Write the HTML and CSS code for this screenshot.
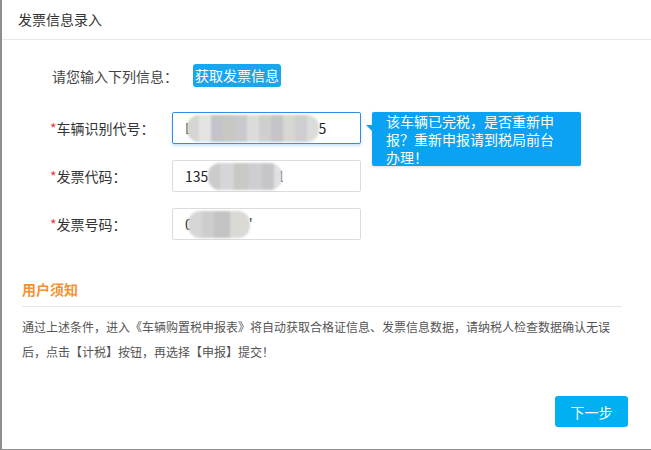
FILE: index.html
```html
<!DOCTYPE html>
<html lang="zh-CN">
<head>
<meta charset="utf-8">
<title>发票信息录入</title>
<link rel="stylesheet" href="styles.css">
</head>
<body>
<div class="modal">
  <div class="header">发票信息录入</div>
  <div class="form">
    <div class="intro">
      <span class="intro-text">请您输入下列信息：</span>
      <button class="fetch-btn">获取发票信息</button>
    </div>
    <div class="row">
      <label class="label"><span class="star">*</span>车辆识别代号：</label>
      <div class="input focus"><span class="ch">L</span><span class="mosaic m1"></span><span class="ch">5</span></div>
      <div class="tip">该车辆已完税，是否重新申报？重新申报请到税局前台办理！</div>
    </div>
    <div class="row">
      <label class="label"><span class="star">*</span>发票代码：</label>
      <div class="input"><span class="ch">135</span><span class="mosaic m2"></span><span class="ch">l</span></div>
    </div>
    <div class="row">
      <label class="label"><span class="star">*</span>发票号码：</label>
      <div class="input"><span class="ch">0</span><span class="mosaic m3"></span><span class="ch">'</span></div>
    </div>
  </div>
  <div class="notice">
    <div class="notice-title">用户须知</div>
    <p class="notice-text">通过上述条件，进入《车辆购置税申报表》将自动获取合格证信息、发票信息数据，请纳税人检查数据确认无误<br>后，点击【计税】按钮，再选择【申报】提交！</p>
  </div>
  <div class="footer">
    <button class="next-btn">下一步</button>
  </div>
</div>
</body>
</html>
```

FILE: styles.css
```css
* { box-sizing: border-box; }
html, body { margin: 0; padding: 0; }
body {
  background: #8e8e8e;
  width: 651px;
  height: 450px;
  overflow: hidden;
  font-family: "Noto Sans CJK SC", "Noto Sans", sans-serif;
  color: #333;
}
.modal {
  margin-left: 2px;
  width: 649px;
  height: 449px;
  background: #fff;
  display: flex;
  flex-direction: column;
}
.header {
  height: 40px;
  line-height: 39px;
  border-bottom: 1px solid #e9e9e9;
  padding-left: 16px;
  font-size: 14px;
  color: #333;
}
.form {
  padding: 24px 0 0 48px;
  display: flex;
  flex-direction: column;
  gap: 16px;
}
.intro {
  display: flex;
  align-items: center;
  height: 23px;
  margin-bottom: 9px;
  padding-left: 2px;
}
.intro-text {
  font-size: 14px;
  color: #444;
  width: 141px;
}
.fetch-btn {
  height: 23px;
  padding: 0 2px;
  border: none;
  border-radius: 3px;
  background: #19a6ec;
  color: #fff;
  font-family: inherit;
  font-size: 14px;
  line-height: 23px;
}
.row {
  position: relative;
  display: flex;
  align-items: center;
  height: 32px;
}
.label {
  width: 122px;
  font-size: 14px;
  color: #333;
}
.star { color: #e4393c; }
.input {
  width: 189px;
  height: 32px;
  border: 1px solid #dcdcdc;
  border-radius: 2px;
  padding-left: 12px;
  display: flex;
  align-items: center;
  font-size: 14px;
  color: #222;
}
.input.focus {
  border-color: #2f8de4;
  box-shadow: 0 2px 3px rgba(47, 141, 228, 0.25);
}
.mosaic {
  display: inline-block;
  height: 27px;
  border-radius: 12px;
  filter: blur(1.2px);
}
.m1 {
  width: 132px;
  margin-left: -6px;
  background: linear-gradient(to right, #d4d6d3 0 12px, #e4e4e4 12px 24px, #c4c3cb 24px 36px, #c6c8c3 36px 48px, #c9c8cd 48px 60px, #dcdcdc 60px 72px, #cfcfcf 72px 84px, #c4c4c9 84px 96px, #d7d6d2 96px 108px, #cecdd2 108px 120px, #dadcdc 120px 132px);
}
.m2 {
  width: 74px;
  margin-right: -3px;
  background: linear-gradient(to right, #cbcbcb 0 12px, #d6d5d9 12px 26px, #c8c8c4 26px 40px, #cecdd1 40px 54px, #c6c6c9 54px 66px, #e0e0e0 66px 74px);
}
.m3 {
  width: 62px;
  margin-left: -5px;
  margin-right: -1px;
  background: linear-gradient(to right, #d6d6d6 0 14px, #cdcdcd 14px 26px, #c4c3c3 26px 42px, #dad9d6 42px 62px);
}
.tip {
  position: absolute;
  left: 322px;
  top: 0;
  width: 209px;
  padding: 0 23px 0 14px;
  background: #0aa3f3;
  color: #fff;
  font-size: 14px;
  line-height: 18px;
  border-radius: 2px;
  box-shadow: 0 1px 3px rgba(0, 0, 0, 0.15);
}
.tip::before {
  content: "";
  position: absolute;
  left: -6px;
  top: 13px;
  border-style: solid;
  border-width: 0 6px 6px 0;
  border-color: transparent #0aa3f3 transparent transparent;
}
.notice {
  margin-top: 39px;
  padding: 0 29px 0 20px;
}
.notice-title {
  font-size: 14px;
  font-weight: bold;
  color: #f5922e;
  line-height: 20px;
  padding-bottom: 7px;
  border-bottom: 1px solid #e8e8e8;
}
.notice-text {
  margin: 7px 0 0 0;
  font-size: 12px;
  line-height: 25px;
  color: #555;
  white-space: nowrap;
}
.footer {
  display: flex;
  justify-content: flex-end;
  padding: 32px 23px 0 0;
}
.next-btn {
  width: 73px;
  height: 31px;
  border: none;
  border-radius: 3px;
  background: #00b0f0;
  color: #fff;
  font-family: inherit;
  font-size: 14px;
}
```
